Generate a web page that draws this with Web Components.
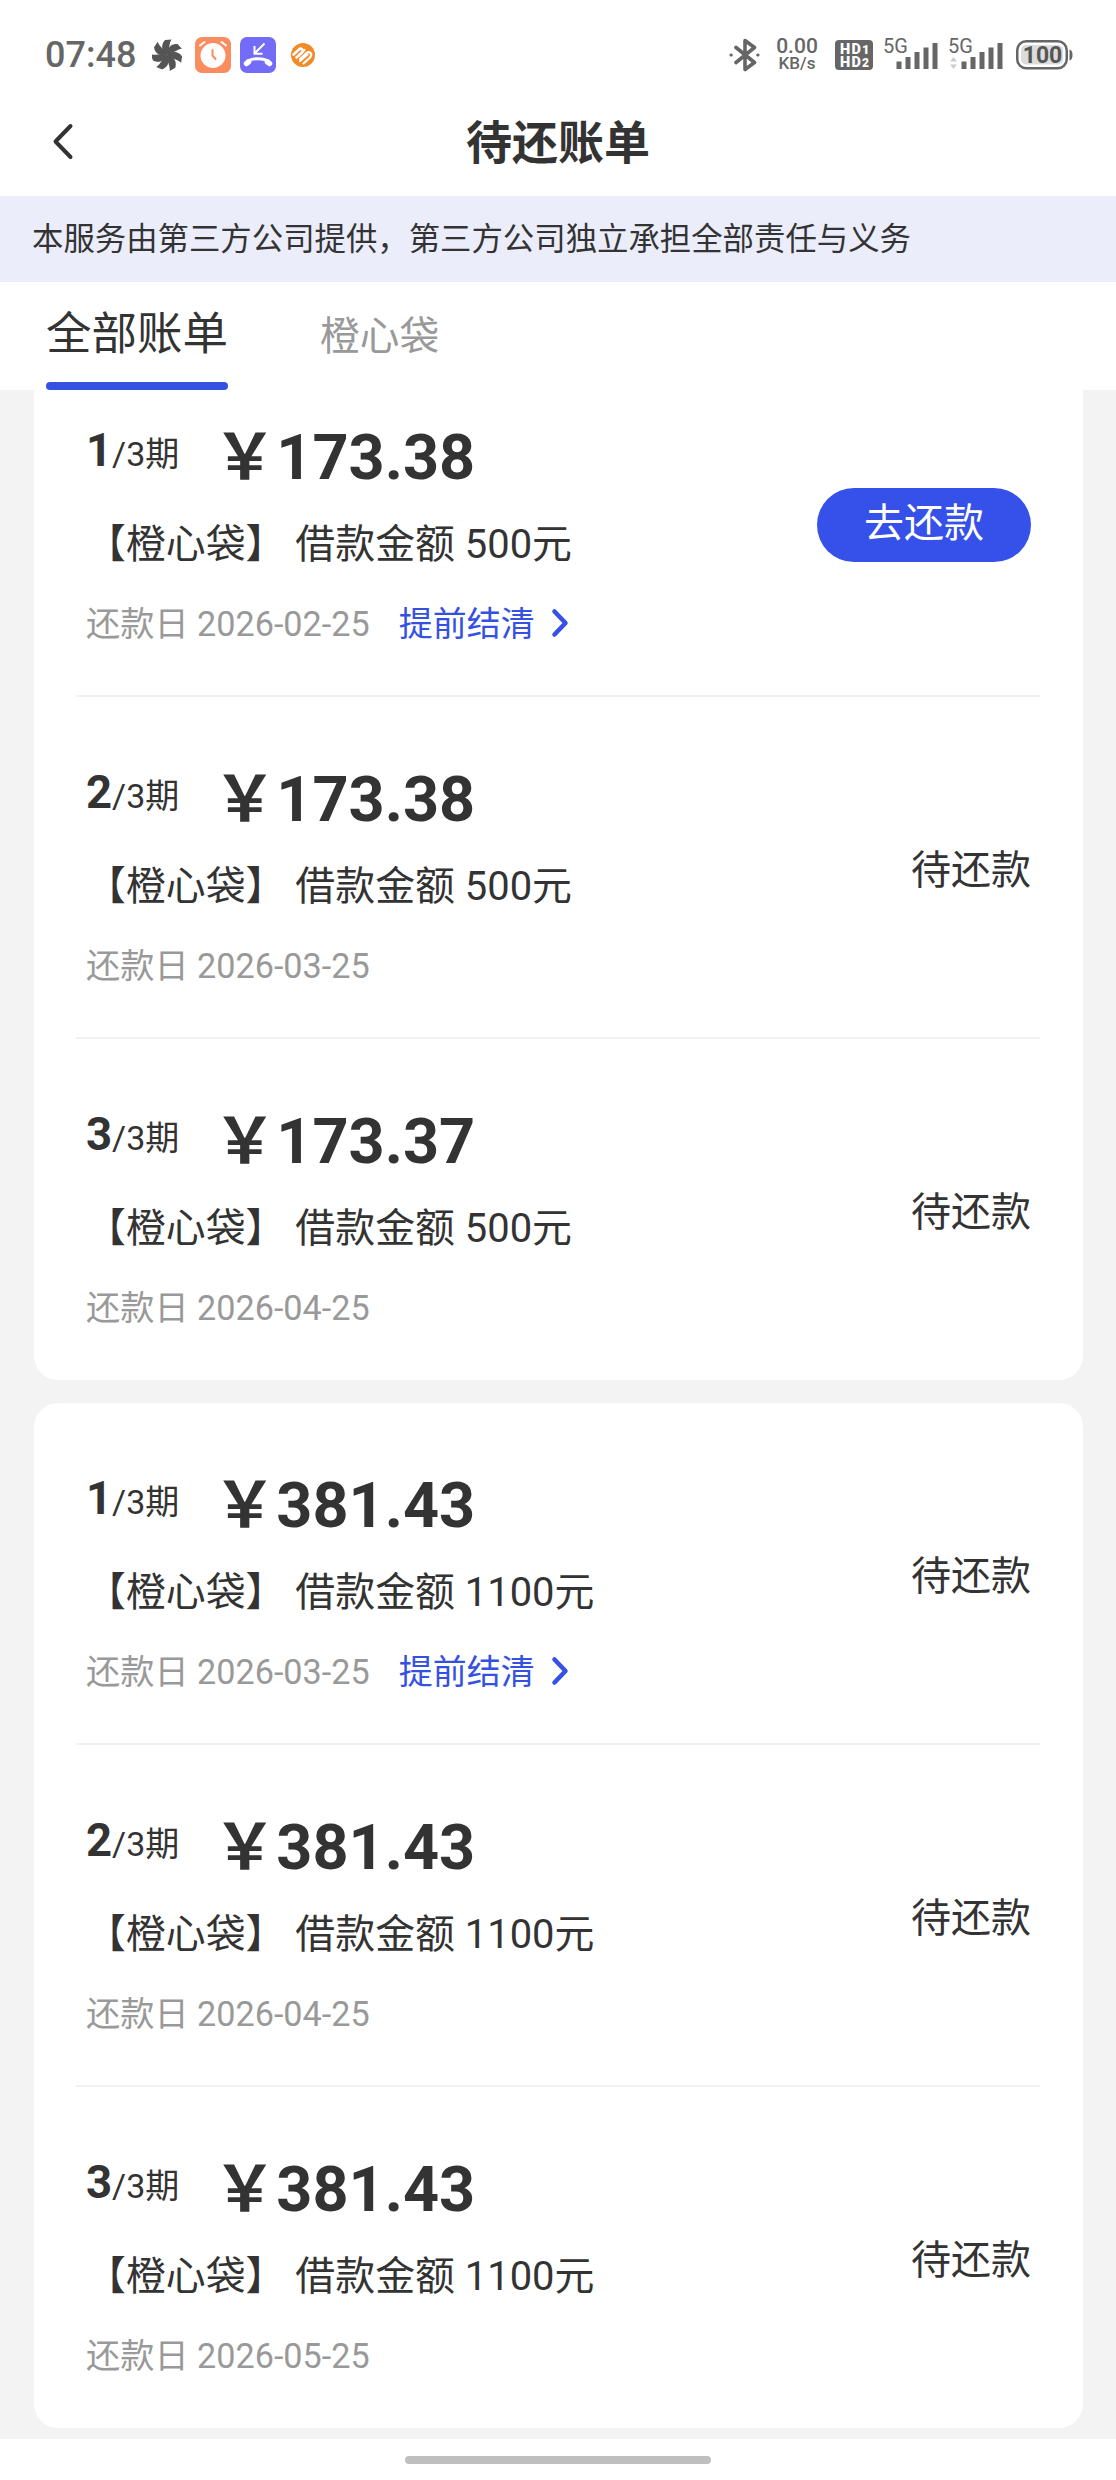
<!DOCTYPE html>
<html lang="zh-CN">
<head>
<meta charset="utf-8">
<title>待还账单</title>
<style>
  body {
    margin: 0;
    background-color: white;
    color: #333;
    font-family: Roboto, "Noto Sans CJK SC", sans-serif;
  }
</style>
</head>
<body>
<bill-page>
  <status-bar slot="header" time="07:48"></status-bar>
  <nav-bar slot="header">待还账单</nav-bar>
  <notice-bar slot="header">本服务由第三方公司提供，第三方公司独立承担全部责任与义务</notice-bar>
  <tab-bar slot="header">
    <tab-item active>全部账单</tab-item>
    <tab-item>橙心袋</tab-item>
  </tab-bar>

  <bill-card>
    <bill-row index="1" amount="173.38" total="500" date="2026-02-25" settle payable></bill-row>
    <bill-row index="2" amount="173.38" total="500" date="2026-03-25"></bill-row>
    <bill-row index="3" amount="173.37" total="500" date="2026-04-25"></bill-row>
  </bill-card>
  <bill-card>
    <bill-row index="1" amount="381.43" total="1100" date="2026-03-25" settle></bill-row>
    <bill-row index="2" amount="381.43" total="1100" date="2026-04-25"></bill-row>
    <bill-row index="3" amount="381.43" total="1100" date="2026-05-25"></bill-row>
  </bill-card>
</bill-page>

<script>
// small helper: every element is a template plus an optional setup
const define = (name, html, setup) => {
  const template = document.createElement("template");
  template.innerHTML = html;

  window.customElements.define(
    name,
    class extends HTMLElement {
      constructor() {
        super();
        this.attachShadow({ mode: "open" });
        this.shadowRoot.appendChild(template.content.cloneNode(true));
        if (setup) setup(this, this.shadowRoot);
      }
    }
  );
};

const blade = "M0 0C-4-3-7.500-9-2-15L4.500-15.500C1.500-11 3-5 0 0Z";
const fan = [0, 1, 2, 3, 4, 5, 6]
  .map((i) => `<path transform="rotate(${(i * 360) / 7})" d="${blade}"/>`)
  .join("");

define("status-bar", `
  <style>
    :host {
      display: flex;
      box-sizing: border-box;
      height: 110px;
      padding: 0 43px 0 45px;
      align-items: center;
      color: #666;
    }
    svg { display: block; flex: none; }
    .time {
      width: 107px;
      font-size: 36px;
      font-weight: 500;
      line-height: 44px;
    }
    .apps { display: flex; align-items: center; }
    .clock { margin-left: 13px; }
    .call { margin-left: 9px; }
    .coin { margin-left: 14px; }
    .right { display: flex; align-items: center; margin-left: auto; }
    .speed {
      width: 42px;
      margin-left: 16px;
      text-align: center;
      font-weight: 500;
    }
    .speed div:first-child { font-size: 21px; line-height: 16px; }
    .speed div:last-child { font-size: 17px; line-height: 18px; }
    .hd { margin-left: 17px; }
    .sig { margin-left: 9px; }
    .battery { margin-left: 13px; }
  </style>
  <div class="time"></div>
  <div class="apps">
    <svg width="30" height="32" viewBox="-15 -16 30 32" fill="#555">${fan}</svg>
    <svg class="clock" width="36" height="36" viewBox="0 0 36 36" fill="none" stroke-linecap="round" stroke-linejoin="round">
      <rect width="36" height="36" rx="7" fill="#fa8d5f"/>
      <circle cx="18" cy="18.500" r="12.500" fill="#fff"/>
      <path d="M5 8.500L9.500 5M31 8.500L26.500 5" stroke="#fff" stroke-width="2"/>
      <path d="M17.500 13V18.500L20.500 22" stroke="#fa8d5f" stroke-width="2"/>
    </svg>
    <svg class="call" width="36" height="36" viewBox="0 0 36 36" fill="none" stroke="#fff">
      <rect width="36" height="36" rx="7" fill="#746cf7" stroke="none"/>
      <path d="M24.500 6.500L15 16M14.500 9V16.700H22.500" stroke-width="2"/>
      <path d="M7 25C11 20.500 25 20.500 29 25" stroke-width="3"/>
      <path d="M6.500 26.500L8.500 24.800M29.500 26.500L27.500 24.800" stroke-width="5.500" stroke-linecap="round"/>
    </svg>
    <svg class="coin" width="26" height="26" viewBox="0 0 26 26" fill="none" stroke="#fff" stroke-linecap="round">
      <circle cx="13" cy="13" r="12" fill="#f28a27" stroke="none"/>
      <path d="M3.500 12.500L9 7.500C11 5.500 14 8 12 10.500L6.500 15.500" stroke-width="2.600"/>
      <path d="M10 19L17.500 12.500M12 10.500L14.500 8M13.500 21.500L20 15.500C23 12 19.500 8.500 16.500 11L10 17" stroke-width="2.200"/>
    </svg>
  </div>
  <div class="right">
    <svg width="32" height="34" viewBox="0 0 32 34" fill="none" stroke="#666" stroke-width="3.600" stroke-linejoin="round" stroke-linecap="round">
      <path d="M8 9.500L26.500 24.500L17 31.500V2.500L26.500 9.500L8 24.500"/>
      <path d="M3 17H3.200M29.800 17H30" stroke-width="3.200"/>
    </svg>
    <div class="speed"><div>0.00</div><div>KB/s</div></div>
    <svg class="hd" width="38" height="30" viewBox="0 0 38 30" font-family="Roboto, sans-serif" font-weight="900" fill="#fff">
      <rect width="38" height="30" rx="4" fill="#666"/>
      <text x="5" y="13.500" font-size="14.500" textLength="21">HD</text>
      <text x="27" y="13.500" font-size="13">1</text>
      <text x="5" y="26.500" font-size="14.500" textLength="21">HD</text>
      <text x="27" y="26.500" font-size="12">2</text>
    </svg>
    <svg class="sig" width="56" height="44" viewBox="-2 -6 56 44" fill="#666">
      <text x="-1" y="14" font-family="Roboto, sans-serif" font-size="20">5G</text>
      <path d="M12.500 22.500h5v7.500h-5zM21.500 18h5v12h-5zM30.500 13h5v17h-5zM39.500 8.500h5v21.500h-5zM48.500 4h5v26h-5z"/>
    </svg>
    <svg class="sig" width="56" height="44" viewBox="-2 -6 56 44" fill="#666">
      <text x="-1" y="14" font-family="Roboto, sans-serif" font-size="20">5G</text>
      <path d="M1 22.500h7l-3.500-4.500zM1 25.500h7l-3.500 4.500z" fill="#ccc"/>
      <path d="M12.500 22.500h5v7.500h-5zM21.500 18h5v12h-5zM30.500 13h5v17h-5zM39.500 8.500h5v21.500h-5zM48.500 4h5v26h-5z"/>
    </svg>
    <svg class="battery" width="57" height="30" viewBox="0 0 57 30">
      <rect x="1.250" y="1.250" width="49.500" height="27" rx="9" fill="none" stroke="#666" stroke-width="2.500"/>
      <rect x="5" y="5" width="42" height="19.500" rx="5" fill="#dcdcdc"/>
      <path d="M53.500 9.500c4 .5 4 10.500 0 11z" fill="#666"/>
      <text x="26.500" y="22.500" text-anchor="middle" font-family="Roboto, sans-serif" font-size="23" font-weight="700" fill="#555">100</text>
    </svg>
  </div>
`, (host, root) => {
  root.querySelector(".time").textContent = host.getAttribute("time");
});

define("nav-bar", `
  <style>
    :host {
      display: grid;
      grid-template-columns: 1fr auto 1fr;
      box-sizing: border-box;
      height: 86px;
      padding: 0 52px 22px;
      align-items: center;
    }
    h1 {
      margin: 0;
      padding-top: 3px;
      font-size: 46px;
      font-weight: 700;
      line-height: 61px;
    }
  </style>
  <svg width="22" height="38" viewBox="0 0 22 38" fill="none" stroke="#333" stroke-width="4" stroke-linecap="round" stroke-linejoin="round">
    <path d="M18.500 3L3.500 18.500L18.500 34"/>
  </svg>
  <h1><slot></slot></h1>
`);

define("notice-bar", `
  <style>
    :host {
      display: block;
      height: 86px;
      padding-left: 32px;
      background-color: #ebedfb;
      font-size: 31.4px;
      line-height: 88px;
      white-space: nowrap;
    }
  </style>
  <slot></slot>
`);

define("tab-bar", `
  <style>
    :host {
      display: flex;
      height: 108px;
      padding-left: 46px;
      gap: 92px;
      background-color: white;
    }
  </style>
  <slot></slot>
`);

define("tab-item", `
  <style>
    :host {
      display: block;
      box-sizing: border-box;
      color: #999;
      font-size: 39.7px;
      line-height: 109px;
    }
    :host([active]) {
      padding-top: 6px;
      color: #333;
      font-size: 45.5px;
      line-height: 94px;
    }
    :host([active])::after {
      content: "";
      display: block;
      height: 8px;
      border-radius: 4px;
      background-color: #3551e2;
    }
  </style>
  <slot></slot>
`);

define("bill-card", `
  <style>
    :host {
      display: block;
      border-radius: 24px;
      background-color: white;
    }
  </style>
  <slot></slot>
`);

define("bill-row", `
  <style>
    :host {
      display: flex;
      box-sizing: border-box;
      height: 342px;
      margin: 0 43px 0 42px;
      padding: 0 9px 0 10px;
      align-items: center;
      justify-content: space-between;
      border-bottom: 2px solid #f1f1f1;
    }
    :host(:last-child) {
      height: 341px;
      border-bottom-color: transparent;
    }
    .info {
      padding-top: 19px;
    }
    .head {
      display: flex;
      gap: 34px;
      font-size: 34px;
      line-height: 68px;
    }
    .head b { font-size: 45.5px; line-height: 1; }
    .amount {
      font-size: 63px;
      font-weight: 700;
      line-height: 75px;
    }
    .desc {
      margin-top: 20px;
      font-size: 39.9px;
      line-height: 59px;
      white-space: pre;
    }
    .foot {
      display: flex;
      align-items: center;
      margin-top: 25px;
      font-size: 34.2px;
      line-height: 50px;
      color: #999;
    }
    .settle {
      display: none;
      align-items: center;
      gap: 15px;
      margin-left: 29px;
      color: #3551e2;
      font-size: 34px;
    }
    .settle svg { margin-top: -3px; }
    :host([settle]) .settle { display: flex; }
    .state {
      padding-top: 8px;
      font-size: 40px;
      line-height: 60px;
    }
    :host([payable]) .state {
      box-sizing: border-box;
      width: 214px;
      height: 74px;
      padding-top: 0;
      border-radius: 37px;
      background-color: #3551e9;
      color: white;
      text-align: center;
      line-height: 72px;
    }
  </style>
  <div class="info">
    <div class="head">
      <div><b></b>/3期</div>
      <div class="amount"></div>
    </div>
    <div class="desc"></div>
    <div class="foot">
      <span class="date"></span>
      <span class="settle">提前结清
        <svg width="20" height="30" viewBox="0 0 20 30" fill="none" stroke="#3551e9" stroke-width="4.500" stroke-linecap="round" stroke-linejoin="round">
          <path d="M4.500 3.500L15.500 15L4.500 26.500"/>
        </svg>
      </span>
    </div>
  </div>
  <div class="state"></div>
`, (host, root) => {
  root.querySelector("b").textContent = host.getAttribute("index");
  root.querySelector(".amount").textContent = "￥" + host.getAttribute("amount");
  root.querySelector(".desc").textContent = `【橙心袋】 借款金额 ${host.getAttribute("total")}元`;
  root.querySelector(".date").textContent = "还款日 " + host.getAttribute("date");
  root.querySelector(".state").textContent = host.hasAttribute("payable") ? "去还款" : "待还款";
});

define("bill-page", `
  <style>
    :host {
      display: flex;
      flex-direction: column;
      height: 2480px;
      overflow: hidden;
    }
    /* the list is scrolled a little, its top is cut off under the tabs */
    .list {
      display: flex;
      flex-direction: column;
      justify-content: flex-end;
      gap: 23px;
      box-sizing: border-box;
      height: 2049px;
      padding: 0 33px 11px 34px;
      background-color: #f3f3f3;
      overflow: hidden;
    }
    .home {
      display: flex;
      flex: 1;
      align-items: center;
      justify-content: center;
    }
    .home div {
      width: 306px;
      height: 8px;
      border-radius: 4px;
      background-color: #bfbfbf;
    }
  </style>
  <header><slot name="header"></slot></header>
  <div class="list"><slot></slot></div>
  <div class="home"><div></div></div>
`);
</script>
</body>
</html>
